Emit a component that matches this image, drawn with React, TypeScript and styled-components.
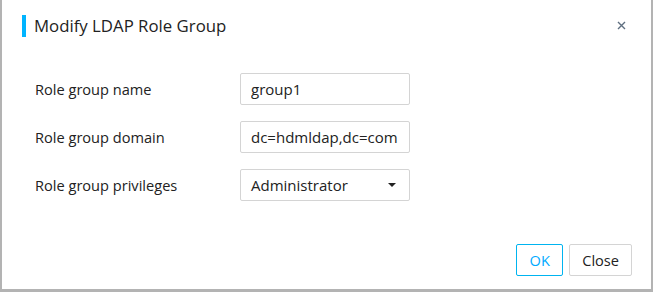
import { FC } from "react";
import styled, { createGlobalStyle } from "styled-components";

const GlobalStyle = createGlobalStyle`
  html, body {
    margin: 0;
    padding: 0;
    background: #b3b3b3;
  }
  body {
    font-family: "Open Sans", "Noto Sans", Arial, sans-serif;
    color: #222;
  }
`;

const fields = [
  { label: "Role group name", value: "group1" },
  { label: "Role group domain", value: "dc=hdmldap,dc=com" },
];

export const App: FC = () => (
  <>
    <GlobalStyle />
    <Dialog>
      <Header>
        <Accent />
        <Title>Modify LDAP Role Group</Title>
        <CloseIcon aria-label="close">
          <svg width="9" height="9" viewBox="0 0 9 9">
            <path d="M1 1 L8 8 M8 1 L1 8" stroke="#5f6f80" strokeWidth="1.4" />
          </svg>
        </CloseIcon>
      </Header>
      <Form>
        {fields.map((f) => (
          <Row key={f.label}>
            <Label>{f.label}</Label>
            <Input defaultValue={f.value} />
          </Row>
        ))}
        <Row>
          <Label>Role group privileges</Label>
          <Select>
            <span>Administrator</span>
            <Caret />
          </Select>
        </Row>
      </Form>
      <Footer>
        <Button primary>OK</Button>
        <Button>Close</Button>
      </Footer>
    </Dialog>
  </>
);

export default App;

const Dialog = styled.div`
  width: 649px;
  height: 289px;
  margin-left: 2px;
  background: #fff;
  display: flex;
  flex-direction: column;
`;

const Header = styled.div`
  display: flex;
  align-items: center;
  padding: 15px 24px 0 20px;
  height: 22px;
`;

const Accent = styled.div`
  width: 4px;
  height: 22px;
  background: #00b4ff;
`;

const Title = styled.h1`
  margin: 0 0 0 8px;
  flex: 1;
  font-size: 16.8px;
  font-weight: 400;
  color: #222;
  line-height: 22px;
`;

const CloseIcon = styled.span`
  display: flex;
  align-items: center;
  width: 9px;
  height: 9px;
  margin: 0 1px 1px 0;
`;

const Form = styled.div`
  display: flex;
  flex-direction: column;
  gap: 16px;
  padding: 36px 0 0 33px;
`;

const Row = styled.div`
  display: grid;
  grid-template-columns: 205px 170px;
  align-items: center;
`;

const Label = styled.label`
  font-size: 14.6px;
  color: #222;
`;

const fieldBox = `
  box-sizing: border-box;
  height: 32px;
  width: 170px;
  border: 1px solid #d4d4d4;
  border-radius: 2px;
  padding: 0 10px;
  font-family: "Open Sans", "Noto Sans", Arial, sans-serif;
  font-size: 15px;
  color: #222;
  background: #fff;
`;

const Input = styled.input`
  ${fieldBox}
  outline: none;
`;

const Select = styled.div`
  ${fieldBox}
  display: flex;
  align-items: center;
  justify-content: space-between;
  padding-right: 13px;
`;

const Caret = styled.span`
  width: 0;
  height: 0;
  border-left: 4px solid transparent;
  border-right: 4px solid transparent;
  border-top: 4px solid #222;
`;

const Footer = styled.div`
  margin-top: auto;
  display: flex;
  justify-content: flex-end;
  gap: 6px;
  padding: 0 19px 13px 0;
`;

const Button = styled.button<{ primary?: boolean }>`
  box-sizing: border-box;
  height: 32px;
  min-width: 47px;
  padding: 0 12px;
  border: 1px solid ${({ primary }) => (primary ? "#00b4f0" : "#d4d4d4")};
  border-radius: 2px;
  background: #fff;
  color: ${({ primary }) => (primary ? "#00aaff" : "#222")};
  font-family: "Open Sans", "Noto Sans", Arial, sans-serif;
  font-size: 14.6px;
  cursor: pointer;
`;
